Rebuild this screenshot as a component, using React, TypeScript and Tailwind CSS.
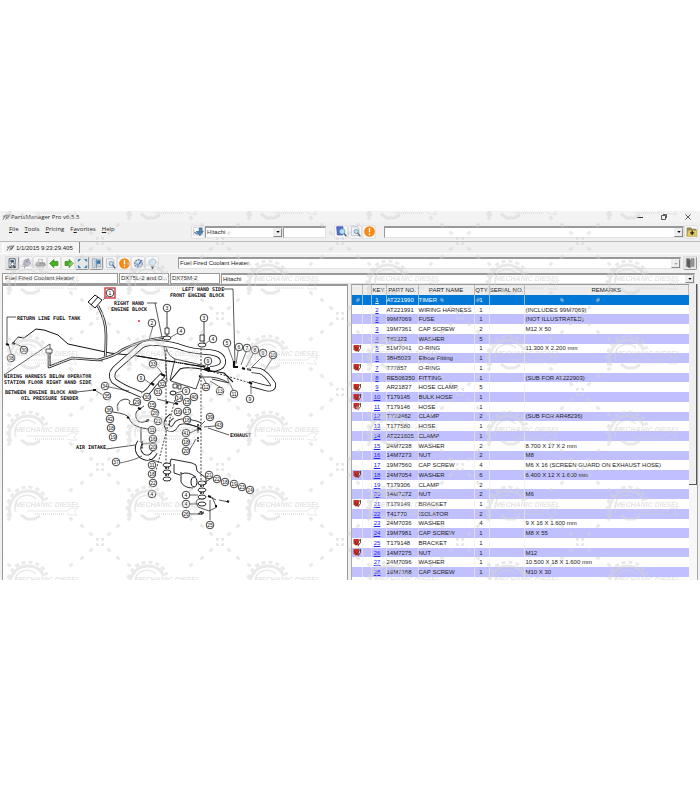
import React from "react";

type Part = [string, string, string, string, string, boolean?];

const parts: Part[] = [
  ["1", "AT221990", "TIMER", "1", ""],
  ["2", "AT221991", "WIRING HARNESS", "1", "(INCLUDES 99M7069)"],
  ["2", "99M7069", "FUSE", "1", "(NOT ILLUSTRATED)"],
  ["3", "19M7361", "CAP SCREW", "2", "M12 X 50"],
  ["4", "T62323", "WASHER", "5", ""],
  ["5", "51M7041", "O-RING", "1", "11.300 X 2.200 mm", true],
  ["6", "38H5023", "Elbow Fitting", "1", ""],
  ["7", "T77857", "O-RING", "1", "", true],
  ["8", "RE506350", "FITTING", "1", "(SUB FOR AT222903)"],
  ["9", "AR21837", "HOSE CLAMP", "5", "", true],
  ["10", "T179145", "BULK HOSE", "1", "", true],
  ["11", "T179146", "HOSE", "1", "", true],
  ["12", "TY22462", "CLAMP", "2", "(SUB FOR AR48236)"],
  ["13", "T177580", "HOSE", "1", ""],
  ["14", "AT221605", "CLAMP", "1", ""],
  ["15", "24M7238", "WASHER", "2", "8.700 X 17 X 2 mm"],
  ["16", "14M7273", "NUT", "2", "M8"],
  ["17", "19M7560", "CAP SCREW", "4", "M6 X 16 (SCREEN GUARD ON EXHAUST HOSE)"],
  ["18", "24M7054", "WASHER", "6", "6.400 X 12 X 1.600 mm", true],
  ["19", "T179306", "CLAMP", "2", ""],
  ["20", "14M7272", "NUT", "2", "M6"],
  ["21", "T179149", "BRACKET", "1", "", true],
  ["22", "T41770", "ISOLATOR", "2", ""],
  ["23", "24M7036", "WASHER", "4", "9 X 16 X 1.600 mm"],
  ["24", "19M7981", "CAP SCREW", "1", "M8 X 55"],
  ["25", "T179148", "BRACKET", "1", "", true],
  ["26", "14M7275", "NUT", "1", "M12", true],
  ["27", "24M7096", "WASHER", "1", "10.500 X 18 X 1.600 mm"],
  ["28", "19M7168", "CAP SCREW", "1", "M10 X 30"],
  ["29", "24M7047", "WASHER", "1", "20 X 76 X 2.500"],
];

const callouts: [string, number, number][] = [
  ["3", 167, 308], ["3", 204, 318], ["2", 152, 323], ["4", 181, 331], ["4", 213, 339],
  ["5", 227, 343], ["6", 239, 347], ["7", 247, 348], ["8", 255, 350], ["9", 263, 353],
  ["10", 273, 355], ["9", 208, 361], ["33", 153, 364], ["9", 141, 378], ["32", 162, 384],
  ["31", 158, 392], ["9", 186, 391], ["40", 194, 397], ["12", 206, 387], ["13", 220, 391],
  ["11", 234, 394], ["9", 250, 399], ["34", 105, 386], ["35", 107, 396], ["29", 137, 402],
  ["30", 147, 397], ["15", 152, 405], ["14", 179, 398], ["15", 187, 402], ["16", 178, 412],
  ["17", 187, 411], ["36", 109, 410], ["42", 110, 419], ["28", 155, 413], ["21", 158, 421],
  ["11", 152, 430], ["18", 187, 420], ["39", 210, 417], ["43", 219, 425], ["41", 186, 433],
  ["18", 186, 442], ["20", 186, 451], ["18", 111, 428], ["19", 113, 437], ["16", 153, 439],
  ["20", 153, 447], ["37", 116, 462], ["11", 152, 465], ["18", 152, 474], ["22", 153, 483],
  ["4", 152, 494], ["21", 209, 475], ["22", 217, 479], ["18", 225, 482], ["19", 234, 484],
  ["23", 242, 487], ["24", 250, 490], ["4", 186, 495], ["4", 186, 504], ["26", 186, 514],
  ["25", 210, 525], ["38", 11, 358], ["30", 24, 350],
];

const notes: [string, number, number][] = [
  ["LEFT HAND SIDE", 182, 291], ["FRONT ENGINE BLOCK", 170, 297],
  ["RIGHT HAND", 114, 305], ["ENGINE BLOCK", 111, 311],
  ["RETURN LINE FUEL TANK", 17, 320], ["WIRING HARNESS BELOW OPERATOR", 4, 378],
  ["STATION FLOOR RIGHT HAND SIDE", 4, 384], ["BETWEEN ENGINE BLOCK AND", 5, 394],
  ["OIL PRESSURE SENDER", 21, 400], ["AIR INTAKE", 76, 449], ["EXHAUST", 230, 437],
];

const pipes = [
  "M142 395 L133 391 Q124 388 114 381 Q109 374 117 367 L141 346 Q146 342 158 343 Q172 344 183 348 Q191 351 207 352 Q224 353 223 363 Q221 369 210 369",
  "M142 395 Q147 394 153 385 L163 375",
  "M252 370 L260 371 Q266 373 273 384 Q274 390 266 388 L251 384",
  "M172 416 Q164 422 168 428 Q173 431 176 425 Q180 418 200 425",
  "M140 442 Q135 450 142 456 Q150 461 155 452",
];

function Diagram() {
  return (
    <svg viewBox="3 286 344 294" className="block w-full" role="img" aria-label="Fuel fired coolant heater assembly">
      <g fill="none" stroke="#111" strokeLinejoin="round">
        <path d="M13 343 L18 337 L24 338 L36 329 L44 330 L58 335 L68 344 L110 353 L138 356 L205 367" strokeWidth="1" />
        <path d="M7 344 V317 H16 M4 375 L50 344 V367 L72 358 L103 361 M157 303 H155 L165 352 L167 382 M155 303 H147 M224 289 H233 L235 363 M77 392 L94 390 M106 449 L150 443 M229 435 L208 428" strokeWidth=".7" />
        <path d="M98 306 Q106 320 106 335 Q106 350 105 358 L98 360 L72 358 L49 367 L49 353 M98 360 Q115 356 122 350 Q140 340 167 337" stroke="#222" strokeWidth="2.6" />
        <path d="M98 306 Q106 320 106 335 Q106 350 105 358 L98 360 L72 358 L49 367 L49 353 M98 360 Q115 356 122 350 Q140 340 167 337" stroke="#ddd" strokeWidth="1.1" />
        {pipes.map((d) => (
          <g key={d}>
            <path d={d} strokeWidth="6" />
            <path d={d} stroke="#fff" strokeWidth="4.4" />
          </g>
        ))}
        <path d="M137 356 L205 367 M170 381 L180 369 Q187 366 206 370 L224 373 L233 382" strokeWidth="1.1" />
        <path d="M167 312 V337 M204 322 V345 M166 347 Q168 356 175 359 L206 366 M175 359 L170 380 M171 381 L196 389 L201 375 M203 377 Q218 376 229 383 L212 379" strokeWidth=".8" />
        <path d="M166 350 V466 M201 345 V480 M210 371 L250 383 M175 400 L154 478" strokeWidth=".8" strokeDasharray="2 1.5" />
        <path d="M165 328 h4 v6 h-4 z M200 335 h4 v6 h-4 z M173 384 h4 v4 h-4 z M178 385 h3 v4 h-3 z" fill="#fff" strokeWidth=".8" />
        <ellipse cx="167" cy="338" rx="4" ry="2" fill="#fff" strokeWidth=".9" />
        <ellipse cx="202" cy="345" rx="4" ry="2" fill="#fff" strokeWidth=".9" />
        <ellipse cx="173" cy="393" rx="3" ry="2" fill="#fff" strokeWidth="1" />
        <path d="M88 302 L95 295 L102 300 L95 308 Z M91 305 L98 297" fill="#fff" strokeWidth="1" />
        <path d="M103 300 L107 296 M153 326 L149 340 M178 333 L171 337 M209 341 L205 344 M228 347 L234 363 M238 351 L236 364 M246 352 L241 365 M253 354 L246 367 M262 357 L251 368 M272 359 L264 371 M208 365 L206 370 M233 390 L227 378 M220 387 L210 381 M206 383 L203 377 M251 394 V385 M144 379 L151 384 M157 367 L162 373 M109 387 L129 391 M96 391 L103 395 M120 463 Q135 460 142 456 M25 348 L14 343 M11 354 L9 346 M183 391 L176 393" strokeWidth=".6" />
        <path d="M118 411 Q115 401 125 399 Q132 400 129 403 Q129 405 134 405 L139 402 M113 412 Q128 414 129 418 Q131 427 148 429 M144 406 L137 411 Q134 416 138 421 Q142 424 148 420 M141 427 V442" strokeWidth=".8" />
        <path d="M157 399 L177 404 M149 459 L162 463 M198 507 L196 502 Q197 498 204 499 M208 496 L216 500 M219 500 L229 502 M198 507 L209 511 L217 507 M212 497 L216 506 M210 520 L210 500 M213 477 L204 483 M189 495 H198 M189 504 H199 M190 514 H199 M205 421 L200 426 M215 426 L204 427 M187 424 L198 427 M190 433 L198 429 M189 451 L196 439" strokeWidth=".7" />
        <path d="M170 464 L171 459 L192 463 L196 465 L197 471 L206 478 V484 H198 M174 464 V473 L180 475 M181 472 V482 Q184 488 193 488 M181 474 Q188 471 196 477" strokeWidth=".9" />
        <ellipse cx="194" cy="482" rx="3" ry="5" fill="#fff" strokeWidth="1" />
        {[465, 472, 479].map((y) => <ellipse key={y} cx="167" cy={y} rx="4" ry="2" fill="#fff" strokeWidth=".9" />)}
        {[483, 490, 497, 504].map((y) => <ellipse key={y} cx="202" cy={y} rx="4" ry="2" fill="#fff" strokeWidth=".9" />)}
        <path d="M165 468 h4 M165 475 h4 M200 486 h4 M200 493 h4 M198 424 V433 M198 437 V442 M200 512 h3 v2 h-4 z M142 441 V449" strokeWidth="1.4" strokeDasharray="2 .8" />
        <path d="M205 369 l4 -1 v3 z M234 361 v6 l4 0 M242 368 l3 1 M247 369 l4 1 M249 382 l3 2 M151 383 l3 2 M161 374 l4 2 M93 390 h3 M6 344 l3 1 M12 343 l3 1 M127 417 l2 1 M138 408 l3 1 M146 421 l3 -1 M175 403 l3 1 M166 402 l2 1 M199 376 l4 1 M197 428 l4 1 M227 501 l2 1 M208 496 l3 1 M215 506 l2 0" strokeWidth="2.2" />
        <rect x="46" y="349" width="6" height="4" fill="#fff" strokeWidth=".7" />
      </g>
      <circle cx="139" cy="321" r="1" fill="#f02030" />
      <g fill="#111" fontFamily="'DejaVu Sans Mono', monospace" fontSize="5" fontWeight="bold">
        {notes.map(([text, x, y]) => <text key={text} x={x} y={y}>{text}</text>)}
      </g>
      <rect x="105" y="288" width="10" height="10" fill="none" stroke="#d43a43" strokeWidth="1.4" />
      <g fontFamily="'Liberation Sans', sans-serif" fontSize="5" textAnchor="middle">
        {[["1", 110, 293] as [string, number, number], ...callouts].map(([n, x, y]) => (
          <g key={`${n}-${x}-${y}`}>
            <circle cx={x} cy={y} r="3.8" fill="#fff" stroke="#111" strokeWidth=".8" />
            <text x={x} y={y + 2} fill="#111">{n}</text>
          </g>
        ))}
      </g>
    </svg>
  );
}

const spokes: [number, number][] = [[9, 8], [18, 16], [29, 23]];
const corners: [number, number][] = [[1, 1], [-1, 1], [1, -1], [-1, -1]];

function Watermark() {
  const cols = [-105, 15, 135, 255, 375, 495, 615];
  const rows = [-8, 67, 142, 218, 293, 368];
  return (
    <svg aria-hidden="true" className="pointer-events-none absolute inset-0 h-full w-full overflow-hidden opacity-50">
      <defs>
        <g id="mark" stroke="#d2d2d2" fill="none">
          <path d="M-4 13 A18 18 0 0 1 -2 -5 A18 18 0 0 1 29 -3" strokeWidth="3" />
          <path d="M-6 13 A20 20 0 0 1 -4 -7 A20 20 0 0 1 32 -4" strokeWidth="3" strokeDasharray="4 3" />
          <path d="M1 8 A13 13 0 0 1 2 -4 A13 13 0 0 1 21 -5" strokeWidth="1.500" />
          <path d="M12 7 H52 L56 4 H63 L59 8 L62 11 H56 L52 10" strokeWidth="1" />
          <path d="M20 10 H50" strokeWidth="2" strokeDasharray="1 1" />
          <path d="M6 11 L12 15 H19 L25 12" strokeWidth="3" />
          <g transform="translate(-35 -37)">
            <path d="M-3 -1 v-2 h2 M1 -3 h2 v2 M3 1 v2 h-2 M-1 3 h-2 v-2" strokeWidth="2" />
            {corners.map(([sx, sy]) => spokes.map(([x, y]) => (
              <rect key={`${sx}${sy}${x}`} x="-2" y="-1.500" width="4" height="3" fill="#d2d2d2" stroke="none" transform={`translate(${sx * x} ${sy * y}) rotate(${sx * sy * 40})`} />
            )))}
          </g>
        </g>
      </defs>
      {rows.map((y) => cols.map((x) => (
        <g key={`${x}-${y}`} transform={`translate(${x} ${y})`}>
          <use href="#mark" />
          <text y="3" fill="#c9c9c9" fontFamily="'Liberation Sans', sans-serif" fontSize="7" fontStyle="italic" fontWeight="bold">MECHANIC DIESEL</text>
        </g>
      )))}
    </svg>
  );
}

function AppMark() {
  return (
    <svg viewBox="0 0 10 8" className="h-2 w-[9px] shrink-0" aria-hidden="true">
      <path d="M1 7 L4 2 H8 L7 4 H4 M4 7 L6 4 M1 3 H3 M6 6 L9 1" fill="none" stroke="#555" strokeWidth=".9" />
    </svg>
  );
}

const glyphs: Record<string, React.ReactNode> = {
  doc: <><path d="M3 1h9v13H3z" fill="#dce7ef" stroke="#334" /><path d="M5 3h5v3H5z" fill="#38556c" /><circle cx="8" cy="9" r="2.5" fill="#fff" stroke="#28404f" /><path d="M9 11l3 3M4 13h3" stroke="#222" strokeWidth="1.5" /></>,
  plate: <><path d="M5 3l6-2 3 7-5 4-5-3z" fill="#b3b5c4" stroke="#818399" /><path d="M6 6l5-2M2 9l8 2M5 15l1-6M2 12h5" stroke="#73758f" /></>,
  printer: <><path d="M5 2h6v5H5z" fill="#eee" stroke="#aaa" /><path d="M2 7h12l1 4H1z" fill="#aaa" stroke="#888" /><path d="M3 11h10v2H3z" fill="#ddd" stroke="#999" /></>,
  left: <path d="M1 8l6-6v3h6v6H7v3z" fill="#4bad22" stroke="#328314" />,
  right: <path d="M15 8L9 2v3H3v6h6v3z" fill="#4bad22" stroke="#328314" />,
  fit: <path d="M2 5V2h3zM11 2h3v3zM14 11v3h-3zM5 14H2v-3z" fill="#2478ae" stroke="#2478ae" />,
  split: <><path d="M2 1h4v13H2zM10 2h4v11h-4z" fill="#d1dde7" stroke="#8ca0af" /><path d="M8 1v14M9 4h4v4H9z" fill="#2874a6" stroke="#4c7ba0" /></>,
  find: <><path d="M2 1h9l2 3v10H2z" fill="#edf1f4" stroke="#a7b2bc" /><circle cx="9" cy="8" r="3" fill="#c3e1f1" stroke="#557f9b" /><path d="M11 10l4 5" stroke="#667" strokeWidth="2" /></>,
  alert: <><circle cx="8" cy="8" r="7.8" fill="#f48b18" /><path d="M8 3v6M8 11v2" stroke="#fff" strokeWidth="2" /></>,
  gear: <><circle cx="8" cy="8" r="5.5" fill="#d8e2ef" stroke="#6984ae" strokeWidth="2" strokeDasharray="3 1" /><path d="M5 8l2 3 6-8" fill="none" stroke="#486ca4" strokeWidth="2" /></>,
  bulb: <><path d="M5 11Q2 8 3 5Q5 1 9 1Q14 3 13 7Q11 9 10 12z" fill="#d7e9f5" stroke="#94b4cf" /><path d="M6 13h4M7 15h2" stroke="#666" strokeWidth="2" /></>,
  download: <><path d="M1 2h13v11H1z" fill="#fff" stroke="#bbc" /><path d="M9 3h4v5h2l-5 6-5-6h4z" fill="#5685b4" stroke="#365f8b" /><path d="M2 9l5 3" stroke="#557ea5" strokeWidth="2" /></>,
  search: <><path d="M1 1h9v12H2z" fill="#566fd1" stroke="#354bae" /><circle cx="9" cy="8" r="4" fill="#b8def2" stroke="#5886a5" /><path d="M12 11l3 4" stroke="#456" strokeWidth="2" /></>,
  folder: <><path d="M1 2h6l2 2h6v10H1z" fill="#948654" /><path d="M3 6h13v9H1z" fill="#e4ce62" stroke="#a99544" /><path d="M9 7v6M6 10h6" stroke="#222" strokeWidth="2" /></>,
  door: <><path d="M2 1h5v13l-5-2zM9 1h4v11H9z" fill="#999" stroke="#777" /><path d="M3 1l5 2v12l-5-3z" fill="#5b5b5b" /></>,
};

function IconButton({ name, label, raised = false }: { name: string; label: string; raised?: boolean }) {
  return (
    <button type="button" aria-label={label} className={`flex h-[14px] w-[14px] shrink-0 items-center justify-center rounded-[2px] border p-0 ${raised ? "border-[#ddd] border-r-[#999] border-b-[#999] bg-[#e6e6e6]" : "border-[#e1e1e1] bg-[#f7f7f7]"}`}>
      <svg viewBox="0 0 16 16" className="h-[11px] w-[11px]" fill="none">{glyphs[name]}</svg>
    </button>
  );
}

function Combo({ label, value, className, muted = false }: { label: string; value: string; className: string; muted?: boolean }) {
  return (
    <div className={`flex items-stretch border border-t-2 border-[#e2e2e2] border-t-[#999] border-l-[#999] bg-white ${className}`}>
      <select aria-label={label} className="min-w-0 flex-1 appearance-none bg-transparent pl-px text-[6px] leading-[9px] text-[#222] outline-none">
        <option>{value}</option>
      </select>
      <span className="flex w-[9px] shrink-0 items-center justify-center border border-[#eee] border-r-[#888] border-b-[#888] bg-[#eee]">
        <svg viewBox="0 0 5 3" className={`h-[2px] w-[4px] ${muted ? "text-[#aaa]" : "text-black"}`}><path d="M0 0h5L2.500 3z" fill="currentColor" /></svg>
      </span>
    </div>
  );
}

const menu = ["File", "Tools", "Pricing", "Favorites", "Help"];
const tools: [string, string][] = [
  ["doc", "Page view"], ["plate", "Illustration"], ["printer", "Print"], ["left", "Previous"], ["right", "Next"], ["fit", "Fit"],
  ["split", "Split view"], ["find", "Find"], ["alert", "Notices"], ["gear", "Settings"], ["bulb", "Hints"],
];

export default function App() {
  return (
    <div className="min-h-screen bg-white pt-[211px] font-['Liberation_Sans',sans-serif] text-[6px] leading-[8px] text-[#222]">
      <main className="relative overflow-hidden bg-[#f0f0f0]">
        <header className="flex h-[11px] items-center bg-[#f3f3f3] pl-[2px] font-['Open_Sans',sans-serif]">
          <AppMark />
          <h1 className="flex-1">PartsManager Pro v6.5.5</h1>
          <div className="flex items-center">
            <button type="button" aria-label="Minimize" className="flex h-[11px] w-6 items-center justify-center"><svg viewBox="0 0 6 6" className="h-[6px] w-[6px]"><path d="M0 3.500H6" stroke="#333" /></svg></button>
            <button type="button" aria-label="Restore" className="flex h-[11px] w-6 items-center justify-center"><svg viewBox="0 0 6 6" className="h-[6px] w-[6px]" fill="none"><path d="M.5 1.500h4v4h-4zM2 .5h3.500V4" stroke="#333" strokeWidth=".8" /></svg></button>
            <button type="button" aria-label="Close" className="flex h-[11px] w-6 items-center justify-center"><svg viewBox="0 0 6 6" className="h-[6px] w-[6px]"><path d="M.5 .5l5 5M5.500 .5l-5 5" stroke="#333" strokeWidth=".8" /></svg></button>
          </div>
        </header>

        <div className="flex h-5 items-center border-b border-[#bbb] pr-[2px]">
          <nav className="flex w-[191px] shrink-0 gap-[6px] self-start pt-[3px] pl-[9px] font-['Open_Sans',sans-serif]">
            {menu.map((m) => (
              <button key={m} type="button">{m === "Favorites" ? <>F<u>a</u>vorites</> : <><u>{m[0]}</u>{m.slice(1)}</>}</button>
            ))}
          </nav>
          <IconButton name="download" label="Load catalog" />
          <Combo label="Catalog" value="Hitachi" className="h-3 w-[78px] shrink-0" />
          <input aria-label="Search text" className="h-3 w-[43px] shrink-0 border border-t-2 border-[#e2e2e2] border-t-[#999] border-l-[#999] bg-white outline-none" />
          <div className="flex w-[58px] shrink-0 justify-center">
            <IconButton name="search" label="Search catalog" />
            <IconButton name="find" label="Search page" />
            <IconButton name="alert" label="Alerts" />
          </div>
          <Combo label="History" value="" className="h-3 flex-1" />
          <IconButton name="folder" label="Add favorite" />
        </div>

        <div role="tablist" className="flex h-3 items-end border-b border-white pl-[2px]">
          <button type="button" role="tab" aria-selected="true" className="flex h-[11px] w-[78px] items-center gap-px border-r border-l border-r-[#888] border-l-white bg-[#f5f5f5] pl-[3px] whitespace-nowrap">
            <AppMark />1/1/2015 9:23:29.405
          </button>
        </div>

        <div className="flex h-[18px] items-center pr-[3px] pl-[5px]">
          <div role="toolbar" aria-label="Page tools" className="flex w-[173px] shrink-0">
            {tools.map(([name, label]) => <IconButton key={name} name={name} label={label} raised={["doc", "fit", "split"].includes(name)} />)}
          </div>
          <Combo label="Page title" value="Fuel Fired Coolant Heater" className="h-3 flex-1" muted />
          <div className="flex w-4 shrink-0 justify-end"><IconButton name="door" label="Close page" raised /></div>
        </div>

        <div className="flex h-3 items-center gap-px pr-[5px] pl-[2px]">
          <input aria-label="Assembly" readOnly value="Fuel Fired Coolant Heater" className="h-[11px] w-[116px] border border-[#999] bg-white px-[2px] outline-none" />
          <input aria-label="Models" readOnly value="DX75L-2 and D..." className="h-[11px] w-[50px] border border-[#999] bg-white px-px outline-none" />
          <input aria-label="Model" readOnly value="DX75M-2" className="h-[11px] w-[50px] border border-[#999] bg-white px-px outline-none" />
          <Combo label="Brand" value="Hitachi" className="h-[11px] flex-1" />
        </div>

        <div className="grid h-[296px] grid-cols-2 overflow-hidden pl-[2px]">
          <section className="mr-[3px] overflow-hidden border-t-2 border-r border-l border-[#999] bg-white">
            <Diagram />
          </section>
          <section className="flex min-w-0 overflow-hidden border-l border-[#aaa] pr-[2px]">
            <div className="min-w-0 flex-1 border-t border-[#999]">
              <table className="h-[302px] w-full table-fixed border-collapse whitespace-nowrap">
                <colgroup>
                  <col className="w-[10px]" /><col className="w-[9px]" /><col className="w-[15px]" /><col className="w-[32px]" />
                  <col className="w-[56px]" /><col className="w-[15px]" /><col className="w-[35px]" /><col />
                </colgroup>
                <thead>
                  <tr className="h-[10px] bg-[#ededed] text-center">
                    {["", "", "KEY", "PART NO.", "PART NAME", "QTY", "SERIAL NO.", "REMARKS"].map((h, i) => (
                      <th key={i} className="border-r border-[#bbb] p-0 font-normal">{h}</th>
                    ))}
                  </tr>
                </thead>
                <tbody>
                  {parts.map(([key, no, name, qty, remark, flagged], i) => (
                    <tr key={i} className={`h-[9px] ${i === 0 ? "bg-[#0078d7] text-white" : i % 2 === 0 ? "bg-[#c0c0ff]" : "bg-white"}`}>
                      <td className="border-r border-[#eee]/60 p-0">
                        {flagged && <svg viewBox="0 0 8 8" className="mx-auto h-[7px] w-[8px]"><path d="M0 0h6v7H2L0 5z" fill="#d32c25" /><path d="M3 7l4-6M1 2l2 3M5 0h3v4l-3 4" stroke="#503425" fill="none" /></svg>}
                      </td>
                      <td className="border-r border-[#eee]/60 p-0" />
                      <td className="border-r border-[#eee]/60 p-0 pr-[3px] text-center"><a href="#parts" className={`underline ${i === 0 ? "text-white" : "text-[#2525ed]"}`}>{key}</a></td>
                      <td className="border-r border-[#eee]/60 p-0">{no}</td>
                      <td className="border-r border-[#eee]/60 p-0">{name}</td>
                      <td className="border-r border-[#eee]/60 p-0 pr-px text-center">{qty}</td>
                      <td className="border-r border-[#eee]/60 p-0" />
                      <td className="p-0 pl-px">{remark}</td>
                    </tr>
                  ))}
                </tbody>
              </table>
            </div>
            <div aria-hidden="true" className="w-[9px] shrink-0 border-r border-[#aaa] bg-[#f7f7f7]">
              <div className="h-[201px] border-r border-b border-[#555] bg-[#efefef]" />
            </div>
          </section>
        </div>
        <Watermark />
      </main>
    </div>
  );
}
